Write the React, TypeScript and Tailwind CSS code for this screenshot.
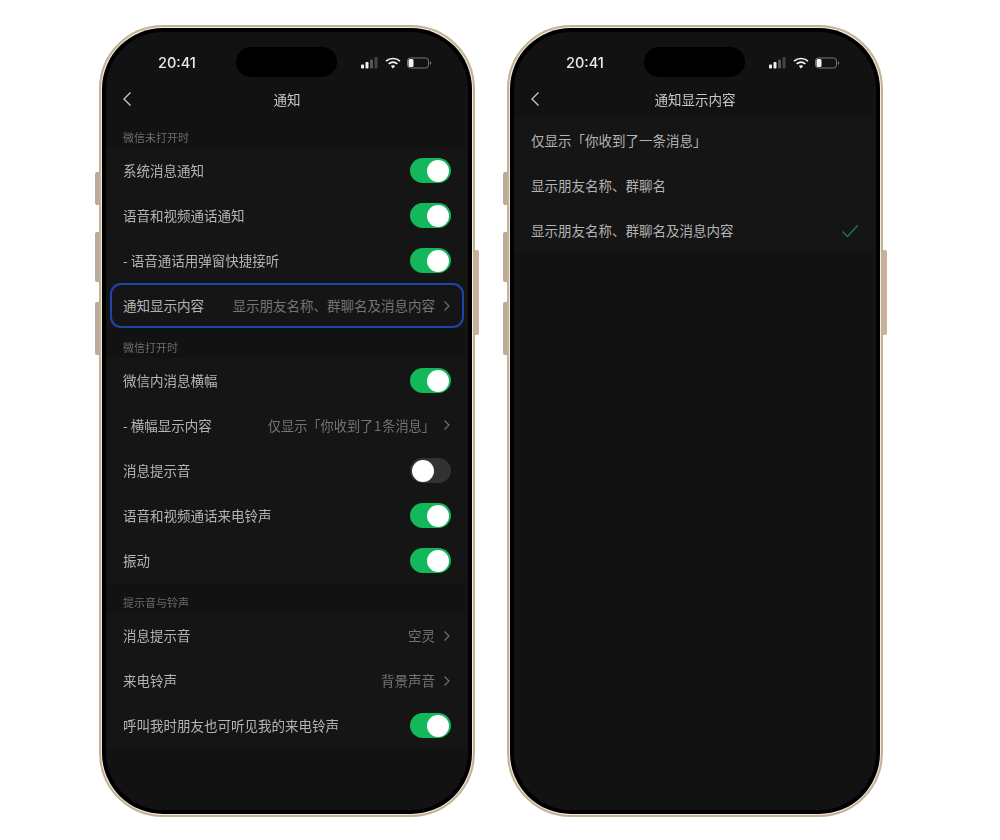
import React from "react";

const font = { fontFamily: '"Noto Sans CJK SC", "Noto Sans", sans-serif' };

const Toggle = ({ on = true }: { on?: boolean }) => (
  <div
    className={`flex h-[25px] w-[41px] items-center rounded-full px-[2px] ${
      on ? "justify-end bg-[#12b85a]" : "justify-start bg-[#323232]"
    }`}
  >
    <div className="h-[22px] w-[22px] rounded-full bg-white" />
  </div>
);

const Chevron = () => (
  <svg width="8" height="12" viewBox="0 0 8 12" fill="none" className="ml-[8px] shrink-0">
    <path d="M1.5 1.5 6 6l-4.5 4.5" stroke="#6f6f6f" strokeWidth="1.2" />
  </svg>
);

const Back = () => (
  <svg width="10" height="16" viewBox="0 0 10 16" fill="none">
    <path d="M8.5 1.5 2 8l6.5 6.5" stroke="#c4c4c4" strokeWidth="1.4" />
  </svg>
);

const StatusBar = () => (
  <div className="relative flex h-[48px] items-center pl-[52px] pr-[36px] pt-[13px]">
    <span className="text-[14.5px] font-medium text-[#ececec]" style={{ fontFamily: '"Inter", sans-serif' }}>
      20:41
    </span>
    <div className="absolute left-[130px] top-[15px] h-[30px] w-[101px] rounded-full bg-black" />
    <div className="ml-auto flex items-center gap-[6px]">
      <svg width="18" height="12" viewBox="0 0 18 12">
        <rect x="0" y="7.5" width="3" height="4" rx="0.8" fill="#eee" />
        <rect x="4.5" y="5" width="3" height="6.5" rx="0.8" fill="#eee" />
        <rect x="9" y="2.5" width="3" height="9" rx="0.8" fill="#555" />
        <rect x="13.5" y="0" width="3" height="11.5" rx="0.8" fill="#444" />
      </svg>
      <svg width="16" height="12" viewBox="0 0 16 12" fill="none">
        <path d="M1 4.2C5 .6 11 .6 15 4.2" stroke="#f2f2f2" strokeWidth="1.7" />
        <path d="M3.6 6.9c2.6-2.2 6.2-2.2 8.8 0" stroke="#f2f2f2" strokeWidth="1.7" />
        <path d="M8 11.5 5.8 9.1c1.3-1 3.1-1 4.4 0z" fill="#f2f2f2" />
      </svg>
      <svg width="25" height="12" viewBox="0 0 25 12" fill="none">
        <rect x="0.5" y="1" width="21" height="10" rx="3" stroke="#777" />
        <rect x="1.5" y="2" width="5" height="8" rx="1.5" fill="#f2f2f2" />
        <path d="M23 4.2c.9.3 1.2 1 1.2 1.8s-.3 1.5-1.2 1.8z" fill="#777" />
      </svg>
    </div>
  </div>
);

const Phone = ({ children }: { children: React.ReactNode }) => (
  <div className="relative h-[792px] w-[376px] rounded-[64px] border-[2px] border-[#c4b294] bg-[#eeebe2] p-[1px] blur-[0.4px]">
    <div className="absolute left-[-6px] top-[145px] h-[33px] w-[4px] rounded-l-[2px] bg-[#bda999]" />
    <div className="absolute left-[-6px] top-[205px] h-[50px] w-[4px] rounded-l-[2px] bg-[#bda999]" />
    <div className="absolute left-[-6px] top-[275px] h-[53px] w-[4px] rounded-l-[2px] bg-[#bda999]" />
    <div className="absolute right-[-6px] top-[223px] h-[85px] w-[4px] rounded-r-[2px] bg-[#c9b09c]" />
    <div className="h-full w-full rounded-[61px] bg-black p-[4px]">
      <div className="h-full w-full overflow-hidden rounded-[57px] bg-[#121212]" style={font}>
        {children}
      </div>
    </div>
  </div>
);

const Header = ({ title }: { title: string }) => (
  <div className="relative flex h-[38px] items-center justify-center">
    <div className="absolute left-[16px] top-[11px]">
      <Back />
    </div>
    <span className="text-[13.5px] text-[#c8c8c8]">{title}</span>
  </div>
);

const Label = ({ children }: { children: React.ReactNode }) => (
  <div className="flex h-[30px] items-center pl-[17px] pt-[9px] text-[11px] text-[#6c6c6c]">{children}</div>
);

const Row = ({
  label,
  value,
  toggle,
  outlined,
}: {
  label: string;
  value?: React.ReactNode;
  toggle?: "on" | "off";
  outlined?: boolean;
}) => (
  <div
    className={`flex h-[45px] items-center bg-[#151515] px-[17px] text-[13.5px] text-[#b4b4b4] ${
      outlined ? "relative" : ""
    }`}
  >
    {outlined && (
      <div className="absolute inset-x-[4px] inset-y-0 rounded-[11px] border-[2px] border-[#1f45ad]" />
    )}
    <span>{label}</span>
    <div className="ml-auto flex items-center">
      {toggle && <Toggle on={toggle === "on"} />}
      {value && (
        <>
          <span className="text-[#747474]">{value}</span>
          <Chevron />
        </>
      )}
    </div>
  </div>
);

export default function App() {
  return (
    <div className="flex h-[840px] w-[1000px] gap-[32px] bg-white pl-[99px] pt-[25px]">
      <Phone>
        <StatusBar />
        <Header title="通知" />
        <Label>微信未打开时</Label>
        <Row label="系统消息通知" toggle="on" />
        <Row label="语音和视频通话通知" toggle="on" />
        <Row label="- 语音通话用弹窗快捷接听" toggle="on" />
        <Row label="通知显示内容" value="显示朋友名称、群聊名及消息内容" outlined />
        <Label>微信打开时</Label>
        <Row label="微信内消息横幅" toggle="on" />
        <Row
          label="- 横幅显示内容"
          value={<span className="text-[13.2px]">{"仅显示「你收到了\u200a1\u200a条消息」"}</span>}
        />
        <Row label="消息提示音" toggle="off" />
        <Row label="语音和视频通话来电铃声" toggle="on" />
        <Row label="振动" toggle="on" />
        <Label>提示音与铃声</Label>
        <Row label="消息提示音" value="空灵" />
        <Row label="来电铃声" value="背景声音" />
        <Row label="呼叫我时朋友也可听见我的来电铃声" toggle="on" />
      </Phone>
      <Phone>
        <StatusBar />
        <Header title="通知显示内容" />
        <Row label="仅显示「你收到了一条消息」" />
        <Row label="显示朋友名称、群聊名" />
        <div className="flex h-[45px] items-center justify-between bg-[#151515] px-[17px] text-[13.5px] text-[#b4b4b4]">
          <span>显示朋友名称、群聊名及消息内容</span>
          <svg width="18" height="14" viewBox="0 0 18 14" fill="none">
            <path d="M1.5 7.5 6.5 12.5 16.5 1.5" stroke="#1f7a4a" strokeWidth="1.4" />
          </svg>
        </div>
      </Phone>
    </div>
  );
}
